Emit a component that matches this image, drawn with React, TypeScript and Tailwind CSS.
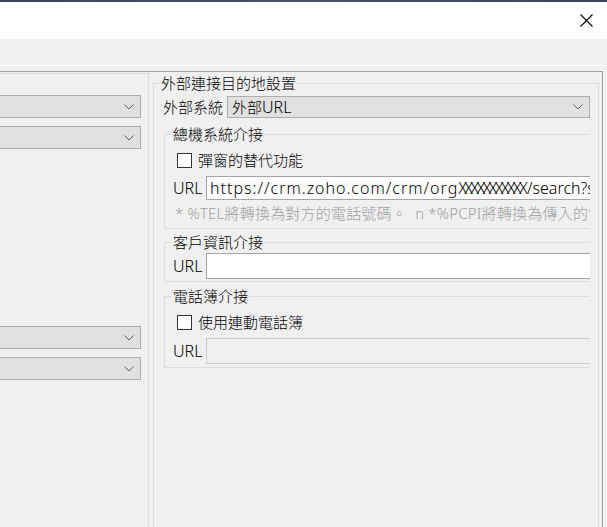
import React from "react";

const Chevron = () => (
  <svg width="10" height="6" viewBox="0 0 10 6" className="shrink-0">
    <path d="M0.5 0.5 L5 5 L9.5 0.5" fill="none" stroke="#606060" strokeWidth="1" />
  </svg>
);

const Combo = ({ children, className }: { children?: React.ReactNode; className?: string }) => (
  <div
    className={
      "flex items-center justify-between border border-[#adadad] bg-[#e1e1e1] pl-[4px] pr-[6px] text-black " +
      (className ?? "")
    }
  >
    <span className="whitespace-nowrap">{children}</span>
    <Chevron />
  </div>
);

const CheckRow = ({ label }: { label: string }) => (
  <div className="flex h-[20px] items-center pl-[4px]">
    <div className="h-[15px] w-[15px] shrink-0 border border-[#333333] bg-white" />
    <span className="ml-[6px] whitespace-nowrap">{label}</span>
  </div>
);

const UrlRow = ({
  children,
  disabled,
  h,
}: {
  children?: React.ReactNode;
  disabled?: boolean;
  h: string;
}) => (
  <div className="flex items-center">
    <span className="w-[33px] shrink-0 text-[16px]">URL</span>
    <div
      className={
        "flex w-[420px] shrink-0 items-center pl-[3px] border " +
        h +
        " " +
        (disabled ? "border-[#cccccc] bg-[#f0f0f0]" : "border-[#a5a5a5] bg-white")
      }
    >
      <span className="whitespace-nowrap text-[16px]">{children}</span>
    </div>
  </div>
);

export default function App() {
  return (
    <div
      className="relative h-[527px] w-[607px] overflow-hidden bg-[#f0f0f0] text-[15px] font-light leading-[20px] text-black"
      style={{ fontFamily: '"Noto Sans", "Noto Sans CJK TC", sans-serif' }}
    >
      <div className="h-[2px] bg-gradient-to-r from-[#3a4359] via-[#4a5570] to-[#3a4359]" />
      <div className="flex h-[37px] items-center justify-end bg-white pr-[14px]">
        <svg width="13" height="13" viewBox="0 0 13 13">
          <path d="M0.5 0.5 L12.5 12.5 M12.5 0.5 L0.5 12.5" stroke="#000" strokeWidth="1.1" fill="none" />
        </svg>
      </div>
      <div className="h-[26px]" />
      <div className="h-px bg-white" />
      <div className="h-[5px]" />
      <div className="flex h-[456px] w-[603px] border-t border-r border-[#a0a0a0]">
        {/* left panel */}
        <div className="mt-px w-[149px] shrink-0 overflow-hidden border-t border-r border-[#dcdcdc]">
          <div className="flex flex-col pt-[21px]">
            <Combo className="-ml-[4px] h-[23px] w-[145px]" />
            <Combo className="-ml-[4px] mt-[8px] h-[23px] w-[145px]" />
            <Combo className="-ml-[4px] mt-[177px] h-[23px] w-[145px]" />
            <Combo className="-ml-[4px] mt-[8px] h-[23px] w-[145px]" />
          </div>
        </div>
        {/* right panel */}
        <fieldset className="ml-[4px] mt-px h-[470px] w-[446px] shrink-0 border border-[#dcdcdc] min-w-0">
          <legend className="ml-[6px] px-[1px] leading-[20px]">外部連接目的地設置</legend>
          <div className="w-[436px] overflow-hidden pl-[9px]">
            <div className="mt-[3px] flex items-center">
              <span className="w-[64px] shrink-0 whitespace-nowrap">外部系統</span>
              <Combo className="h-[22px] w-[363px]">
                外部<span className="text-[16px]">URL</span>
              </Combo>
            </div>
            <fieldset className="ml-px mt-[6px] w-[500px] border border-[#dcdcdc] pb-[5px] pl-[8px] min-w-0">
              <legend className="ml-[-1px] px-[1px]">總機系統介接</legend>
              <div className="mt-[6px]">
                <CheckRow label="彈窗的替代功能" />
              </div>
              <div className="mt-[6px]">
                <UrlRow h="h-[24px]">
                  <span className="tracking-[1px]">https://crm.zoho.com/crm/org</span>
                  <span className="tracking-[-2.7px]">XXXXXXXXXXX</span>
                  <span className="ml-[2px]">/search?searchword=%TEL</span>
                </UrlRow>
              </div>
              <div className="ml-[2px] mt-[3px] whitespace-pre tracking-[0.2px] text-[#a0a0a0]">
                {"* %TEL將轉換為對方的電話號碼。  n *%PCPI將轉換為傳入的電話號碼。"}
              </div>
            </fieldset>
            <fieldset className="ml-px mt-[3px] w-[500px] border border-[#dcdcdc] pb-[2px] pl-[8px] min-w-0">
              <legend className="ml-[-1px] px-[1px]">客戶資訊介接</legend>
              <div className="mt-[1px]">
                <UrlRow h="h-[26px]" />
              </div>
            </fieldset>
            <fieldset className="ml-px mt-[4px] w-[500px] border border-[#dcdcdc] pb-[3px] pl-[8px] min-w-0">
              <legend className="ml-[-1px] px-[1px]">電話簿介接</legend>
              <div className="mt-[6px]">
                <CheckRow label="使用連動電話簿" />
              </div>
              <div className="mt-[6px]">
                <UrlRow h="h-[26px]" disabled />
              </div>
            </fieldset>
          </div>
        </fieldset>
      </div>
    </div>
  );
}
